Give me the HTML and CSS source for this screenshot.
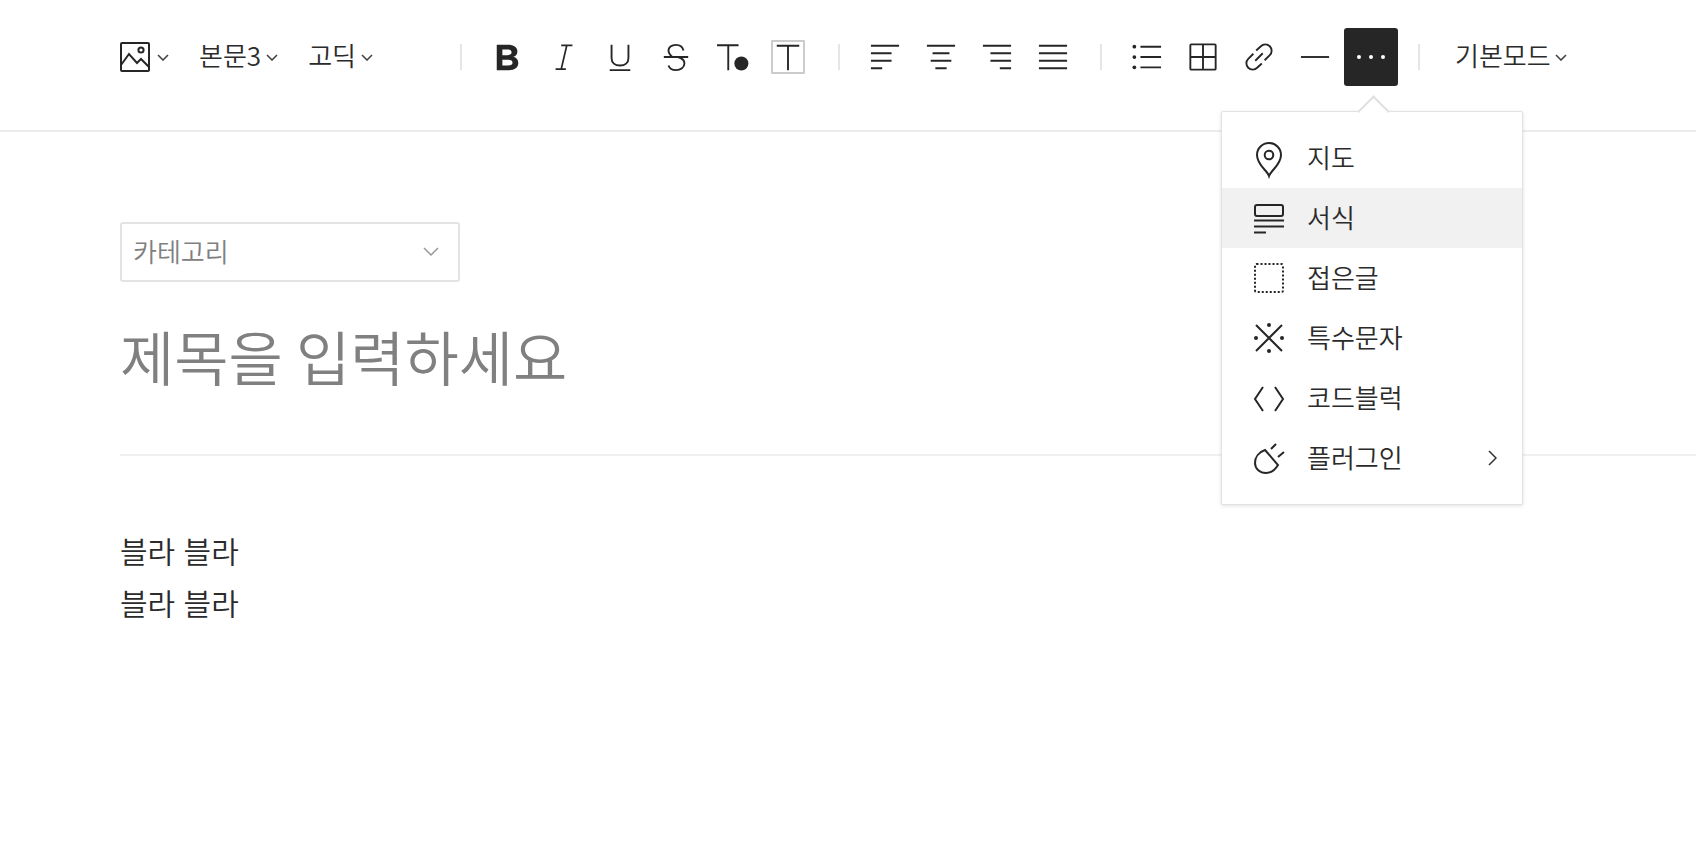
FILE: index.html
```html
<!DOCTYPE html>
<html lang="ko">
<head>
<meta charset="utf-8">
<title>글쓰기</title>
<link rel="stylesheet" href="styles.css">
</head>
<body>
<header class="toolbar">
  <div class="pick pick-img">
    <svg class="ico30" viewBox="0 0 30 30"><rect x="1" y="1" width="28" height="28" rx="1"/><path d="M1 23 9 12l8 9 4-4 8 8"/><circle cx="21" cy="8" r="2.600"/></svg>
    <svg class="chev" viewBox="0 0 12 7"><path d="M1 1l5 5 5-5"/></svg>
  </div>
  <div class="pick pick-text"><span>본문3</span><svg class="chev" viewBox="0 0 12 7"><path d="M1 1l5 5 5-5"/></svg></div>
  <div class="pick pick-text"><span>고딕</span><svg class="chev" viewBox="0 0 12 7"><path d="M1 1l5 5 5-5"/></svg></div>
  <i class="sep sep-a"></i>
  <div class="cell"><svg class="ico" viewBox="0 0 32 32"><path class="fill" fill-rule="evenodd" d="M4 3h12c6 0 10 2.600 10 7 0 3-1.600 5-4.500 5.800 3.600.8 5.500 3.200 5.500 6.500 0 4.700-3.800 7.700-10 7.700H4zM10 8v6h5.500c2.800 0 4.300-1.100 4.300-3 0-2-1.500-3-4.300-3zM10 19v6h6.300c3 0 4.500-1.100 4.500-3s-1.500-3-4.500-3z"/></svg></div>
  <div class="cell"><svg class="ico" viewBox="0 0 32 32"><path d="M13 3.500h12M7 29h11M19 3.500 13 29" class="thin"/></svg></div>
  <div class="cell"><svg class="ico" viewBox="0 0 32 32"><path d="M7 3v14c0 5 3.500 8 9 8s9-3 9-8V3M5 30h22"/></svg></div>
  <div class="cell"><svg class="ico" viewBox="0 0 32 32"><path d="M24 9c-1-4-4-6-8-6-5 0-8 3-8 6 0 3 2 5 4 7M18 16c4 1 7 3 7 7 0 4-4 7-9 7-4 0-7-2-8-5M3 16h26"/></svg></div>
  <div class="cell"><svg class="ico" viewBox="0 0 32 32"><path d="M0 3.500h23M12 3.500V30"/><circle class="fill" cx="26" cy="23" r="7.500"/></svg></div>
  <div class="cell"><span class="boxt"><svg class="ico" viewBox="0 0 32 32"><path d="M4 4h24M16 4v26"/></svg></span></div>
  <i class="sep sep-b"></i>
  <div class="cell"><svg class="ico" viewBox="0 0 32 32"><path d="M1 4h30M1 12h22M1 20h22M1 28h12"/></svg></div>
  <div class="cell"><svg class="ico" viewBox="0 0 32 32"><path d="M1 4h30M7 12h18M5 20h22M10 28h12"/></svg></div>
  <div class="cell"><svg class="ico" viewBox="0 0 32 32"><path d="M1 4h30M9 12h22M9 20h22M19 28h12"/></svg></div>
  <div class="cell"><svg class="ico" viewBox="0 0 32 32"><path d="M1 4h30M1 12h30M1 20h30M1 28h30"/></svg></div>
  <i class="sep sep-c"></i>
  <div class="cell"><svg class="ico" viewBox="0 0 32 32"><path d="M9 5h22M9 16h22M9 27h22"/><circle class="fill" cx="2.500" cy="5" r="2"/><circle class="fill" cx="2.500" cy="16" r="2"/><circle class="fill" cx="2.500" cy="27" r="2"/></svg></div>
  <div class="cell"><svg class="ico" viewBox="0 0 32 32"><rect x="2.500" y="2.500" width="27" height="27" rx="1"/><path d="M16 2.500v27M2.500 16h27"/></svg></div>
  <div class="cell"><svg class="ico" viewBox="0 0 32 32"><path d="M13 9l5-4.500a6.700 6.700 0 0 1 9.500 9.500L22 19.500M12 20l8-8M19 23l-5 4.500A6.700 6.700 0 0 1 4.500 18L10 12.500"/></svg></div>
  <div class="cell"><svg class="ico" viewBox="0 0 32 32"><path d="M1 16h30"/></svg></div>
  <button class="more" type="button"><i></i><i></i><i></i></button>
  <i class="sep sep-d"></i>
  <div class="pick pick-mode"><span>기본모드</span><svg class="chev" viewBox="0 0 12 7"><path d="M1 1l5 5 5-5"/></svg></div>

  <nav class="menu">
    <a class="item">
      <svg class="mi" viewBox="0 0 30 30"><path d="M15 33C13 27 3 22 3 12A12 12 0 0 1 27 12C27 22 17 27 15 33z"/><circle cx="15" cy="12" r="4.300"/></svg>
      <span>지도</span>
    </a>
    <a class="item on">
      <svg class="mi" viewBox="0 0 30 30"><rect x="1" y="2" width="28" height="11" rx="2"/><path d="M0 17.500h30M0 23.500h30M0 29.500h12"/></svg>
      <span>서식</span>
    </a>
    <a class="item">
      <svg class="mi" viewBox="0 0 30 30"><rect class="dash" x="1" y="1" width="28" height="28" rx="1.500"/></svg>
      <span>접은글</span>
    </a>
    <a class="item">
      <svg class="mi" viewBox="0 0 30 30"><path d="M2 2l26 26M28 2 2 28"/><circle class="fill" cx="15" cy="2" r="2"/><circle class="fill" cx="15" cy="28" r="2"/><circle class="fill" cx="2" cy="15" r="2"/><circle class="fill" cx="28" cy="15" r="2"/></svg>
      <span>특수문자</span>
    </a>
    <a class="item">
      <svg class="mi" viewBox="0 0 30 30"><path d="M9 4 1 16l8 12M21 4l8 12-8 12"/></svg>
      <span>코드블럭</span>
    </a>
    <a class="item">
      <svg class="mi" viewBox="0 0 30 30"><path d="M11 7C5 9 1 14 1 20c0 6 5 10 11 10 5 0 9-3 12-8zM17 6l5-5M24 14l6-5"/></svg>
      <span>플러그인</span>
      <svg class="sub" viewBox="0 0 9 16"><path d="M1 1l7 7-7 7"/></svg>
    </a>
  </nav>
</header>

<main class="editor">
  <div class="category">
    <span>카테고리</span>
    <svg class="cat-chev" viewBox="0 0 16 10"><path d="M1 1l7 7 7-7"/></svg>
  </div>
  <h1 class="title">제목을 입력하세요</h1>
  <hr class="rule">
  <div class="body-text">
    <p>블라 블라</p>
    <p>블라 블라</p>
  </div>
</main>
</body>
</html>
```
FILE: styles.css
```css
* { box-sizing: border-box; }
html, body { margin: 0; height: 100%; overflow: hidden; background: #fff; }
body {
  font-family: "Noto Sans CJK KR", "Noto Sans", sans-serif;
  font-weight: 350;
  color: #2b2b2b;
}
svg { display: block; fill: none; stroke: #262626; stroke-width: 2; }
svg .fill { fill: #262626; stroke: none; }

.toolbar {
  position: relative;
  display: flex;
  align-items: center;
  height: 132px;
  padding: 28px 0 44px 120px;
  border-bottom: 2px solid #ececec;
}
.pick { display: flex; align-items: center; font-size: 26px; line-height: 36px; flex: none; }
.pick span { padding-bottom: 4px; }
.pick-img { gap: 7px; }
.pick-text { margin-left: 30px; gap: 5px; }
.pick-mode { margin-left: 35px; gap: 4px; }
.ico30 { width: 30px; height: 30px; }
.chev { width: 12px; height: 7px; stroke-width: 1.6; stroke: #444; }

.sep { display: block; flex: none; width: 2px; height: 26px; background: #e6e6e6; }
.sep-a { margin: 0 18px 0 87px; }
.sep-b { margin: 0 17px 0 22px; }
.sep-c { margin: 0 17px 0 19px; }
.sep-d { margin: 0 0 0 20px; }

.cell { flex: none; width: 56px; height: 58px; display: flex; align-items: center; justify-content: center; }
.ico { width: 30px; height: 30px; overflow: visible; }
.ico .thin { stroke-width: 1.8; }
.boxt { display: block; width: 34px; height: 34px; border: 2px solid #ccc; border-radius: 1px; }

.more {
  flex: none;
  display: flex;
  align-items: center;
  justify-content: center;
  gap: 8px;
  width: 54px;
  height: 58px;
  margin: 0 0 0 1px;
  padding: 0;
  border: 0;
  border-radius: 3px;
  background: #262626;
}
.more i { display: block; width: 4px; height: 4px; border-radius: 50%; background: #fff; }

.menu {
  position: absolute;
  left: 1221px;
  top: 111px;
  width: 302px;
  height: 394px;
  padding: 16px 0;
  background: #fff;
  border: 1px solid #e2e2e2;
  border-radius: 2px;
  box-shadow: 0 1px 4px rgba(0, 0, 0, .12);
  z-index: 2;
}
.menu::before {
  content: "";
  position: absolute;
  left: 140px;
  top: -12px;
  width: 21px;
  height: 21px;
  background: #fff;
  border-top: 2px solid #e0e0e0;
  border-left: 2px solid #e0e0e0;
  transform: rotate(45deg);
}
.item {
  display: flex;
  align-items: center;
  height: 60px;
  padding-left: 32px;
  font-size: 26px;
}
.item span { padding-bottom: 3px; }
.item.on { background: #f1f1f1; }
.mi { width: 30px; height: 30px; flex: none; margin-right: 23px; overflow: visible; }
.mi .dash { stroke-dasharray: 2 2; }
.sub { width: 9px; height: 16px; margin-left: auto; margin-right: 25px; stroke-width: 1.5; stroke: #333; }

.editor { padding: 90px 0 0 120px; }
.category {
  display: flex;
  align-items: center;
  justify-content: space-between;
  width: 340px;
  height: 60px;
  padding: 0 19px 0 11px;
  border: 2px solid #e3e3e3;
  border-radius: 3px;
  font-size: 26px;
  color: #808080;
}
.category span { padding-bottom: 4px; }
.cat-chev { width: 16px; height: 10px; stroke: #999; stroke-width: 1.5; }
.title {
  margin: 34px 0 0;
  font-size: 59px;
  line-height: 80px;
  word-spacing: -3.400px;
  font-weight: 350;
  color: #808080;
}
.rule { margin: 58px 0 0; height: 2px; border: 0; background: #f0f0f0; }
.body-text { margin-top: 68px; font-size: 30px; line-height: 52px; }
.body-text p { margin: 0; }
```
